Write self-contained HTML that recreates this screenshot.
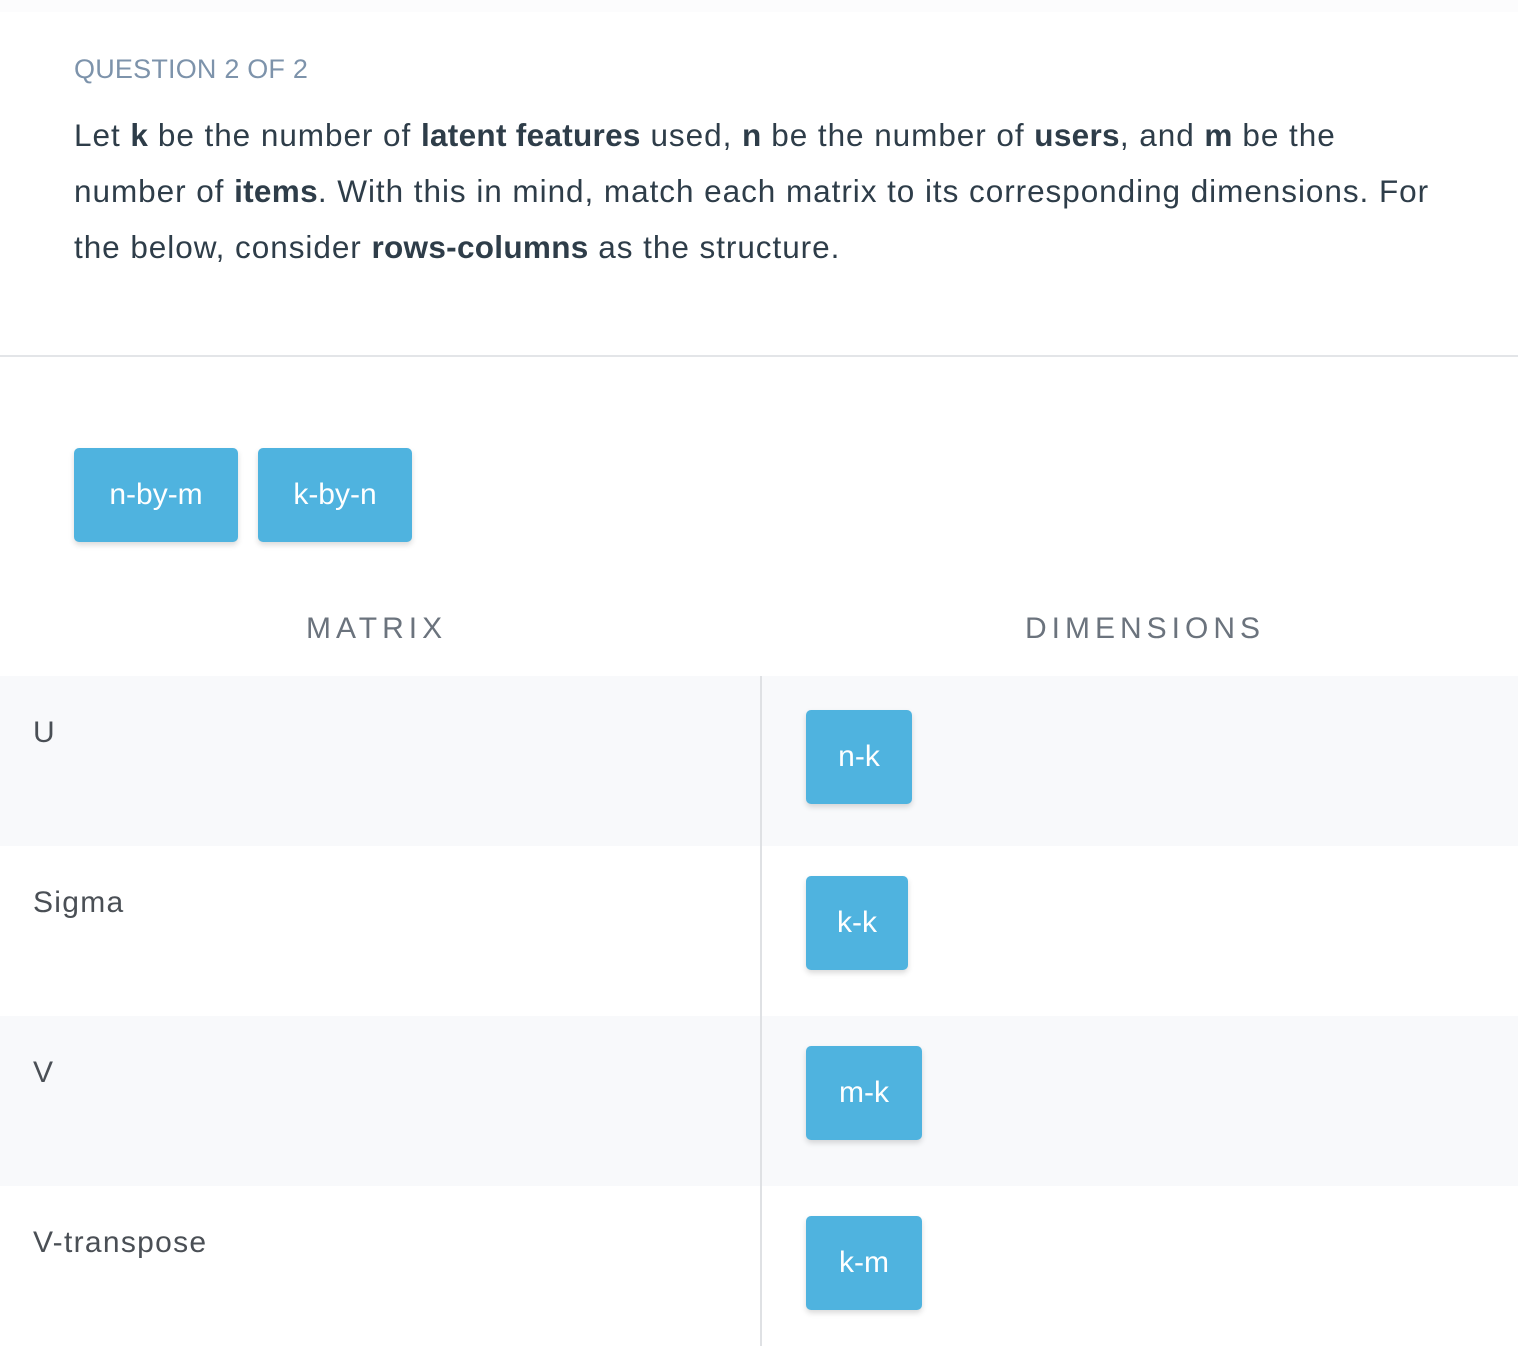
<!DOCTYPE html>
<html><head><style>
body{margin:0;width:1518px;height:1346px;background:#fff;font-family:"Liberation Sans",sans-serif;position:relative;overflow:hidden}
.top{position:absolute;top:0;left:0;right:0;height:12px;background:#fcfcfd}
.q{position:absolute;left:74px;top:54px;font-size:27px;color:#7d93ab;letter-spacing:0.2px}
.p{position:absolute;left:74px;top:107px;width:1440px;font-size:31.5px;line-height:56px;color:#2e3d49;letter-spacing:0.95px;white-space:nowrap}
.p b{font-weight:bold;letter-spacing:0.3px}
.hr{position:absolute;top:355px;left:0;right:0;height:2px;background:#e3e5e8}
.btn{position:absolute;background:#4fb3df;color:#fff;border-radius:5px;font-size:30px;text-align:center;line-height:94px;height:94px;box-shadow:0 3px 6px rgba(0,0,0,.15)}
.h{position:absolute;top:612px;font-size:30px;letter-spacing:5px;color:#6b737d}
.row{position:absolute;left:0;right:0;height:170px}
.alt{background:#f8f9fb}
.lbl{position:absolute;left:33px;font-size:30px;color:#4a4f55;letter-spacing:1.3px}
.vl{position:absolute;left:760px;top:676px;width:2px;height:670px;background:#dfe1e4}
</style></head><body>
<div class="top"></div>
<div class="q">QUESTION 2 OF 2</div>
<div class="p">Let <b>k</b> be the number of <b>latent features</b> used, <b>n</b> be the number of <b>users</b>, and <b>m</b> be the<br>number of <b>items</b>. With this in mind, match each matrix to its corresponding dimensions. For<br>the below, consider <b>rows-columns</b> as the structure.</div>
<div class="hr"></div>
<div class="btn" style="left:74px;top:448px;width:164px">n-by-m</div>
<div class="btn" style="left:258px;top:448px;width:154px">k-by-n</div>
<div class="h" style="left:306px">MATRIX</div>
<div class="h" style="left:1025px">DIMENSIONS</div>
<div class="row alt" style="top:676px"></div>
<div class="row" style="top:846px"></div>
<div class="row alt" style="top:1016px"></div>
<div class="row" style="top:1186px;height:160px"></div>
<div class="vl"></div>
<div class="lbl" style="top:716px">U</div>
<div class="lbl" style="top:886px">Sigma</div>
<div class="lbl" style="top:1056px">V</div>
<div class="lbl" style="top:1226px">V-transpose</div>
<div class="btn" style="left:806px;top:710px;width:106px">n-k</div>
<div class="btn" style="left:806px;top:876px;width:102px">k-k</div>
<div class="btn" style="left:806px;top:1046px;width:116px">m-k</div>
<div class="btn" style="left:806px;top:1216px;width:116px">k-m</div>
</body></html>
